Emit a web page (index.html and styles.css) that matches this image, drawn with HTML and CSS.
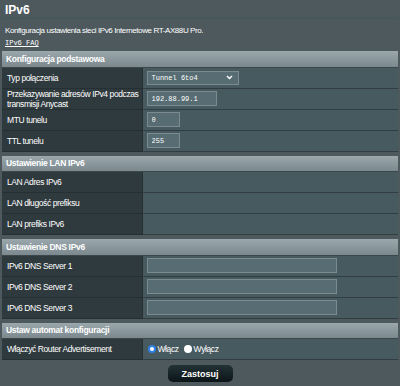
FILE: index.html
```
<!DOCTYPE html>
<html lang="pl">

<head>
    <meta charset="UTF-8" />
    <title>IPv6</title>
    <link rel="stylesheet" href="styles.css">
</head>

<body>
    <div class="page">
        <div class="page-title">IPv6</div>
        <div class="split-line"></div>
        <p class="desc">Konfiguracja ustawienia sieci IPv6 Internetowe RT-AX88U Pro.</p>
        <a class="faq" href="#">IPv6 FAQ</a>

        <!-- Konfiguracja podstawowa -->
        <table class="form-table">
            <colgroup><col class="col-label"><col></colgroup>
            <thead>
                <tr><td colspan="2">Konfiguracja podstawowa</td></tr>
            </thead>
            <tbody>
                <tr>
                    <th>Typ połączenia</th>
                    <td>
                        <div class="select">Tunnel 6to4
                            <svg class="caret" width="7" height="5" viewBox="0 0 7 5"><path d="M1 1 L3.5 3.5 L6 1" fill="none" stroke="#fff" stroke-width="1.4" /></svg>
                        </div>
                    </td>
                </tr>
                <tr>
                    <th><span class="nowrap">Przekazywanie adresów IPv4 podczas</span><br>transmisji Anycast</th>
                    <td><input class="input w70" type="text" value="192.88.99.1"></td>
                </tr>
                <tr>
                    <th>MTU tunelu</th>
                    <td><input class="input w33" type="text" value="0"></td>
                </tr>
                <tr>
                    <th>TTL tunelu</th>
                    <td><input class="input w33" type="text" value="255"></td>
                </tr>
            </tbody>
        </table>

        <!-- Ustawienie LAN IPv6 -->
        <table class="form-table">
            <colgroup><col class="col-label"><col></colgroup>
            <thead>
                <tr><td colspan="2">Ustawienie LAN IPv6</td></tr>
            </thead>
            <tbody>
                <tr><th>LAN Adres IPv6</th><td></td></tr>
                <tr><th>LAN długość prefiksu</th><td></td></tr>
                <tr><th>LAN prefiks IPv6</th><td></td></tr>
            </tbody>
        </table>

        <!-- Ustawienie DNS IPv6 -->
        <table class="form-table">
            <colgroup><col class="col-label"><col></colgroup>
            <thead>
                <tr><td colspan="2">Ustawienie DNS IPv6</td></tr>
            </thead>
            <tbody>
                <tr><th>IPv6 DNS Server 1</th><td><input class="input w190" type="text" value=""></td></tr>
                <tr><th>IPv6 DNS Server 2</th><td><input class="input w190" type="text" value=""></td></tr>
                <tr><th>IPv6 DNS Server 3</th><td><input class="input w190" type="text" value=""></td></tr>
            </tbody>
        </table>

        <!-- Ustaw automat konfiguracji -->
        <table class="form-table">
            <colgroup><col class="col-label"><col></colgroup>
            <thead>
                <tr><td colspan="2">Ustaw automat konfiguracji</td></tr>
            </thead>
            <tbody>
                <tr>
                    <th>Włączyć Router Advertisement</th>
                    <td>
                        <label class="radio"><span class="dot on"></span>Włącz</label>
                        <label class="radio"><span class="dot"></span>Wyłącz</label>
                    </td>
                </tr>
            </tbody>
        </table>

        <div class="apply">
            <button class="button">Zastosuj</button>
        </div>
    </div>
</body>

</html>
```

FILE: styles.css
```
* {
    box-sizing: border-box;
}

body {
    margin: 0;
    background: #4d595d;
    color: #fff;
    font-family: "Liberation Sans", Arial, sans-serif;
    font-size: 8.5px;
    letter-spacing: -0.4px;
}

.page {
    padding: 0 2px;
}

.page-title {
    font-size: 12px;
    font-weight: bold;
    letter-spacing: 0;
    padding: 3px 3px 0;
    height: 18px;
}

.split-line {
    height: 1px;
    background: #3f5a4e;
}

.desc {
    margin: 7px 3px 0;
    font-size: 8px;
    letter-spacing: -0.4px;
    line-height: 10px;
}

.faq {
    display: inline-block;
    margin: 2px 3px 0;
    color: #fff;
    font-family: "Liberation Mono", monospace;
    font-size: 7px;
    letter-spacing: 0;
    line-height: 10px;
    text-decoration: underline;
}

.form-table {
    width: 100%;
    table-layout: fixed;
    border-collapse: collapse;
    margin-top: 4px;
}

.form-table:first-of-type {
    margin-top: 3px;
}

.col-label {
    width: 140px;
}

.form-table thead td {
    height: 16px;
    padding: 0 4px;
    font-weight: bold;
    letter-spacing: -0.3px;
    background: linear-gradient(#9aa7ac, #7b888d);
    border-bottom: 1px solid #3c474b;
}

.form-table th {
    height: 21px;
    padding: 0 5px;
    text-align: left;
    font-weight: normal;
    line-height: 10px;
    background: #2f3a3e;
    border-bottom: 1px solid #262f32;
    border-right: 1px solid #262f32;
}

.nowrap {
    white-space: nowrap;
}

.form-table tbody td {
    height: 21px;
    padding: 0 4px;
    background: #475a5f;
    border-bottom: 1px solid #323d41;
}

.select {
    width: 92px;
    height: 14px;
    padding: 0 5px 0 4px;
    display: flex;
    align-items: center;
    justify-content: space-between;
    background: #576d73;
    border: 1px solid #7b8b90;
    font-family: "Liberation Mono", monospace;
    font-size: 7px;
    letter-spacing: 0;
}

.input {
    height: 15px;
    padding: 0 4px;
    background: #576d73;
    border: 1px solid #7b8b90;
    color: #fff;
    font-family: "Liberation Mono", monospace;
    font-size: 7px;
    outline: none;
}

.w70 {
    width: 70px;
}

.w33 {
    width: 33px;
}

.w190 {
    width: 190px;
}

.radio {
    display: inline-flex;
    align-items: center;
    margin-right: 2px;
}

.dot {
    width: 8px;
    height: 8px;
    border-radius: 50%;
    background: #fff;
    margin: 0 2px 0 1px;
}

.dot.on {
    border: 2px solid #2f7fe8;
}

.apply {
    display: flex;
    justify-content: center;
    padding-top: 5px;
}

.button {
    width: 65px;
    height: 17px;
    border: none;
    border-radius: 5px;
    background: linear-gradient(#233237, #0c1518);
    color: #fff;
    font-family: "Liberation Sans", Arial, sans-serif;
    font-size: 9px;
    font-weight: bold;
}
```
